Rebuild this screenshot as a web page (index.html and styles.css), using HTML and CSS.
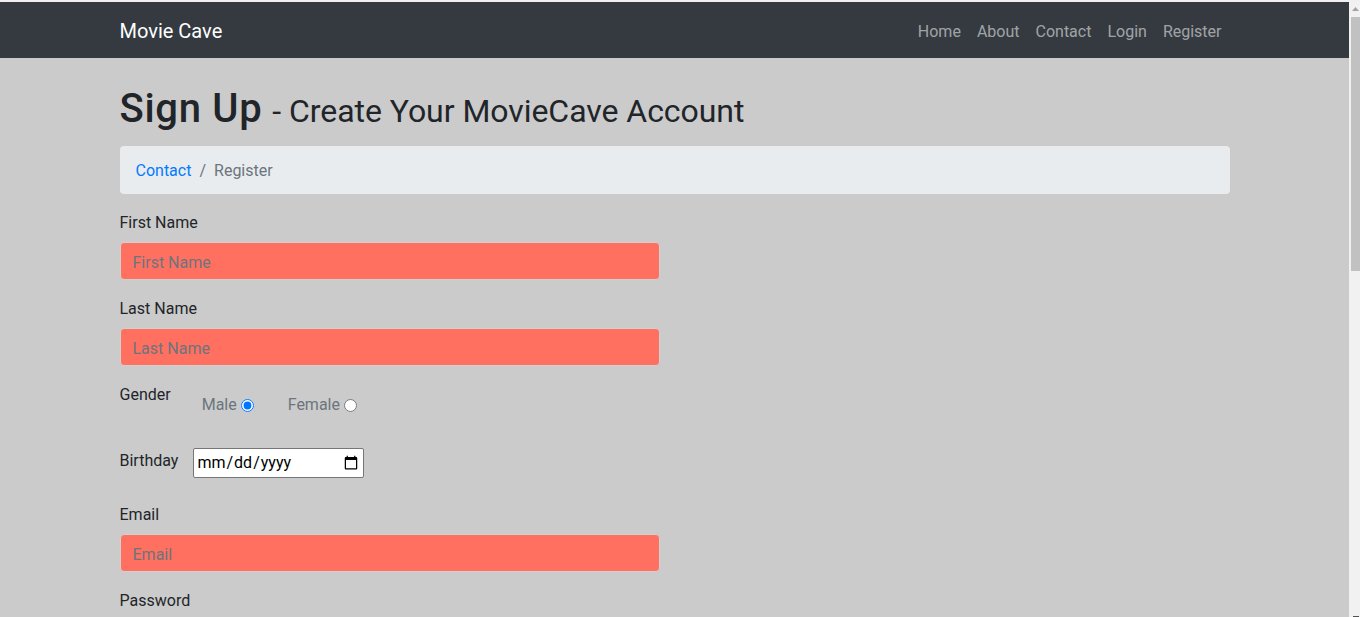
FILE: index.html
```html
<!DOCTYPE html>
<html lang="en">
<head>
<meta charset="utf-8">
<title>Sign Up - Movie Cave</title>
<link rel="stylesheet" href="styles.css">
</head>
<body>
<div class="top-strip"></div>
<div class="frame">
  <div class="page">
    <nav class="navbar">
      <div class="container nav-inner">
        <a class="brand" href="#">Movie Cave</a>
        <ul class="nav-links">
          <li><a href="#">Home</a></li>
          <li><a href="#">About</a></li>
          <li><a href="#">Contact</a></li>
          <li><a href="#">Login</a></li>
          <li><a href="#">Register</a></li>
        </ul>
      </div>
    </nav>
    <main class="container main">
      <h1 class="title"><span class="title-main">Sign Up</span> <small>- Create Your MovieCave Account</small></h1>
      <ol class="breadcrumb">
        <li><a href="#">Contact</a></li>
        <li class="sep">/</li>
        <li class="active">Register</li>
      </ol>
      <form class="form">
        <div class="group">
          <label class="label" for="fn">First Name</label>
          <input class="field" id="fn" type="text" placeholder="First Name">
        </div>
        <div class="group">
          <label class="label" for="ln">Last Name</label>
          <input class="field" id="ln" type="text" placeholder="Last Name">
        </div>
        <div class="group gender">
          <span class="label">Gender</span>
          <div class="radios">
            <label class="radio">Male<input type="radio" name="g" checked></label>
            <label class="radio">Female<input type="radio" name="g"></label>
          </div>
        </div>
        <div class="group birthday">
          <label class="label" for="bd">Birthday</label>
          <input class="date" id="bd" type="date">
        </div>
        <div class="group">
          <label class="label" for="em">Email</label>
          <input class="field" id="em" type="email" placeholder="Email">
        </div>
        <div class="group">
          <label class="label" for="pw">Password</label>
          <input class="field" id="pw" type="password" placeholder="Password">
        </div>
        <div class="group">
          <label class="label" for="pw2">Confirm Password</label>
          <input class="field" id="pw2" type="password" placeholder="Confirm Password">
        </div>
      </form>
    </main>
  </div>
  <div class="scrollbar">
    <div class="arrow-up"><svg width="7" height="4" viewBox="0 0 7 4"><polygon points="0,4 7,4 3.5,0" fill="#a3a3a3"/></svg></div>
    <div class="thumb"></div>
    <div class="arrow-down"></div>
  </div>
</div>
</body>
</html>
```

FILE: styles.css
```css
* { box-sizing: border-box; }

html, body {
  margin: 0;
  height: 617px;
  overflow: hidden;
}

body {
  background: #cbcbcb;
  font-family: Roboto, "Noto Sans", Arial, sans-serif;
  font-size: 16px;
  line-height: 1.5;
  color: #212529;
}

.top-strip {
  height: 2px;
  background: #f0f0f0;
}

.frame {
  display: flex;
  height: 615px;
}

.page {
  flex: 1;
  overflow: hidden;
  min-width: 0;
}

.scrollbar {
  width: 11px;
  background: #f1f1f1;
  display: flex;
  flex-direction: column;
}

.arrow-up {
  height: 15px;
  display: flex;
  justify-content: center;
  align-items: center;
  padding-left: 2px;
  padding-bottom: 2px;
}

.thumb {
  height: 254px;
  margin-left: 2px;
  background: #c1c1c1;
}

.arrow-down {
  margin-top: auto;
  height: 1px;
  width: 6px;
  margin-left: 4px;
  background: #505050;
}

.container {
  max-width: 1140px;
  padding: 0 15px;
  margin: 0 auto;
}

/* navbar */
.navbar {
  background: #343a40;
  height: 56px;
}

.nav-inner {
  height: 56px;
  padding-top: 2px;
  display: flex;
  align-items: center;
  justify-content: space-between;
}

.brand {
  color: #fff;
  font-size: 20px;
  line-height: 30px;
  text-decoration: none;
}

.nav-links {
  list-style: none;
  margin: 0;
  padding: 0;
  display: flex;
}

.nav-links a {
  display: block;
  padding: 9px 8px 7px;
  color: rgba(255, 255, 255, 0.55);
  text-decoration: none;
}

.nav-links li:last-child a {
  padding-right: 0;
  margin-right: 8px;
}

/* main */
.main {
  padding-top: 27px;
}

.title {
  margin: 0 0 13px;
  font-size: 40px;
  font-weight: 500;
  line-height: 1.2;
}

.title-main {
  letter-spacing: 0.7px;
}

.title small {
  font-size: 80%;
  font-weight: 400;
  letter-spacing: -0.05px;
}

.breadcrumb {
  list-style: none;
  margin: 0 0 16px;
  padding: 13px 16px 11px;
  background: #e9ecef;
  border-radius: 4px;
  display: flex;
}

.breadcrumb a {
  color: #007bff;
  text-decoration: none;
}

.breadcrumb .sep {
  padding: 0 8px;
  color: #6c757d;
}

.breadcrumb .active {
  color: #6c757d;
}

/* form */
.form {
  width: 540px;
}

.group {
  margin-bottom: 16px;
}

.label {
  display: block;
  height: 24px;
  padding-top: 1px;
  margin-bottom: 8px;
}

.field {
  display: block;
  width: 100%;
  height: 38px;
  padding: 7px 12px 5px;
  font: inherit;
  color: #495057;
  background: #ff7060;
  border: 1px solid #d6cfcf;
  border-radius: 4px;
}

.field::placeholder {
  color: #6c757d;
  opacity: 1;
}

.gender {
  display: flex;
  align-items: flex-start;
  height: 50px;
}

.radios {
  display: flex;
  margin-left: 31px;
  margin-top: 11px;
  gap: 34px;
}

.radio {
  display: flex;
  align-items: center;
  color: #6c757d;
}

.radio input {
  margin: 0 0 0 4px;
  width: 13px;
  height: 13px;
}

.birthday {
  display: flex;
  align-items: flex-start;
  height: 30px;
  margin-bottom: 24px;
}

.date {
  margin-left: 15px;
  width: 171px;
  height: 30px;
  padding: 1px 2px;
  font: inherit;
  line-height: 24px;
  color: #000;
  background: #fff;
  border: 1px solid #767676;
  border-radius: 2px;
}
```
